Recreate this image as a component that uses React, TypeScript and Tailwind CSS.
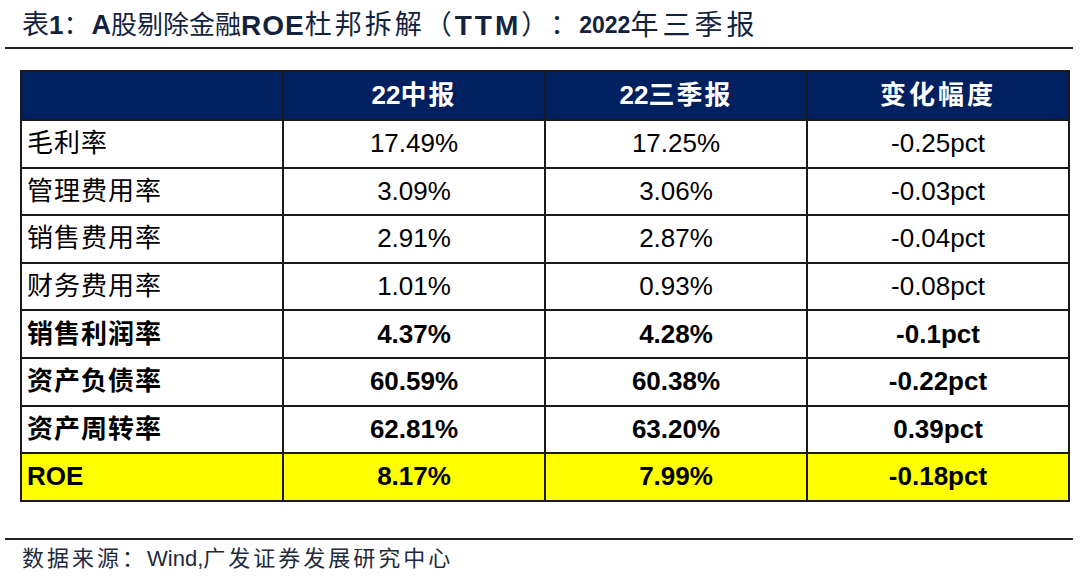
const rows = [
  { label: "毛利率", h1: "17.49%", q3: "17.25%", chg: "-0.25pct", bold: false },
  { label: "管理费用率", h1: "3.09%", q3: "3.06%", chg: "-0.03pct", bold: false },
  { label: "销售费用率", h1: "2.91%", q3: "2.87%", chg: "-0.04pct", bold: false },
  { label: "财务费用率", h1: "1.01%", q3: "0.93%", chg: "-0.08pct", bold: false },
  { label: "销售利润率", h1: "4.37%", q3: "4.28%", chg: "-0.1pct", bold: true },
  { label: "资产负债率", h1: "60.59%", q3: "60.38%", chg: "-0.22pct", bold: true },
  { label: "资产周转率", h1: "62.81%", q3: "63.20%", chg: "0.39pct", bold: true },
];

const cell = "border-2 border-[#1a1a1a]";

export default function App() {
  return (
    <div className="w-[1080px] h-[582px] bg-white overflow-hidden [text-spacing-trim:space-all] font-['Liberation_Sans','Noto_Sans_CJK_SC',sans-serif]">
      {/* Title: CJK set in regular weight, latin in bold */}
      <div className="h-[47px] pl-[22px] pt-[4px] flex items-center font-bold text-[#14233d] whitespace-nowrap">
        <span className="text-[27px] font-normal">表</span>
        <span className="text-[26px]">1</span>
        <span className="text-[26px] font-normal tracking-[2px]">：</span>
        <span className="text-[27px]">A</span>
        <span className="text-[26px] font-normal">股剔除金融</span>
        <span className="text-[28px] tracking-[1px]">ROE</span>
        <span className="text-[27px] font-normal tracking-[3px]">杜邦拆解（</span>
        <span className="text-[28px] tracking-[3px]">TTM</span>
        <span className="text-[27px] font-normal tracking-[2px]">）：</span>
        <span className="text-[23px]">2022</span>
        <span className="text-[28px] font-normal tracking-[4px]">年三季报</span>
      </div>
      <div className="ml-[5px] w-[1068px] h-[2px] bg-[#222]" />

      {/* Table */}
      <table className="mt-[21px] ml-[20px] w-[1050px] table-fixed border-collapse text-[26px] text-black">
        <thead>
          <tr className="h-[49px] bg-[#002060] text-white">
            <th className={cell} />
            <th className={`${cell} font-bold`}>
              22<span className="tracking-[2px]">中报</span>
            </th>
            <th className={`${cell} font-bold`}>
              22<span className="tracking-[2px]">三季报</span>
            </th>
            <th className={`${cell} font-bold tracking-[3px]`}>变化幅度</th>
          </tr>
        </thead>
        <tbody>
          {rows.map((r) => (
            <tr key={r.label} className={`h-[47.6px] ${r.bold ? "font-bold" : "font-normal"}`}>
              <td className={`${cell} pl-[5px] tracking-[1px]`}>{r.label}</td>
              <td className={`${cell} text-center`}>{r.h1}</td>
              <td className={`${cell} text-center`}>{r.q3}</td>
              <td className={`${cell} text-center`}>{r.chg}</td>
            </tr>
          ))}
          <tr className="h-[47.6px] bg-[#ffff00] font-bold">
            <td className={`${cell} pl-[5px]`}>ROE</td>
            <td className={`${cell} text-center`}>8.17%</td>
            <td className={`${cell} text-center`}>7.99%</td>
            <td className={`${cell} text-center`}>-0.18pct</td>
          </tr>
        </tbody>
      </table>

      {/* Source */}
      <div className="mt-[36px] ml-[5px] w-[1068px] h-[2px] bg-[#222]" />
      <div className="mt-[4px] pl-[22px] h-[30px] flex items-center text-[22px] text-[#1f2a3a] whitespace-nowrap">
        <span className="tracking-[3px]">数据来源：</span>
        <span>Wind,</span>
        <span className="tracking-[3px]">广发证券发展研究中心</span>
      </div>
    </div>
  );
}
